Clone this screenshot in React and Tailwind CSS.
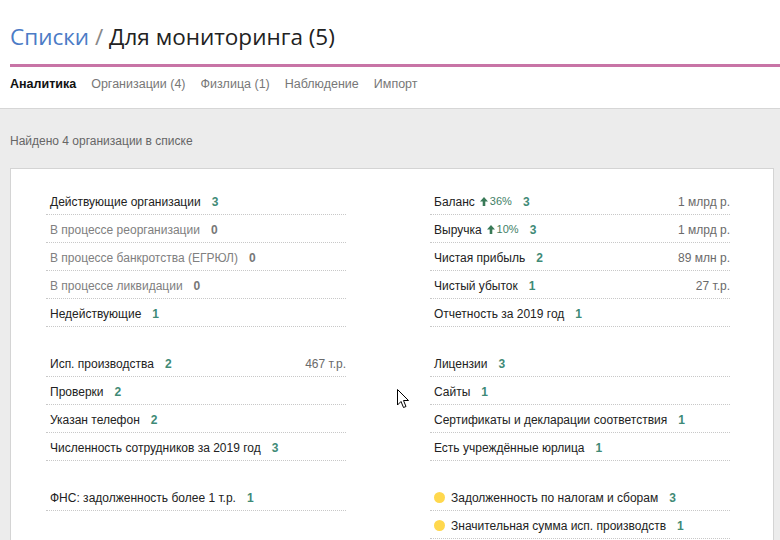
const groupsLeft = [
  [
    { label: "Действующие организации", count: 3 },
    { label: "В процессе реорганизации", count: 0, muted: true },
    { label: "В процессе банкротства (ЕГРЮЛ)", count: 0, muted: true },
    { label: "В процессе ликвидации", count: 0, muted: true },
    { label: "Недействующие", count: 1 },
  ],
  [
    { label: "Исп. производства", count: 2, value: "467 т.р." },
    { label: "Проверки", count: 2 },
    { label: "Указан телефон", count: 2 },
    { label: "Численность сотрудников за 2019 год", count: 3 },
  ],
  [{ label: "ФНС: задолженность более 1 т.р.", count: 1 }],
];

const groupsRight = [
  [
    { label: "Баланс", trend: "36%", count: 3, value: "1 млрд р." },
    { label: "Выручка", trend: "10%", count: 3, value: "1 млрд р." },
    { label: "Чистая прибыль", count: 2, value: "89 млн р." },
    { label: "Чистый убыток", count: 1, value: "27 т.р." },
    { label: "Отчетность за 2019 год", count: 1 },
  ],
  [
    { label: "Лицензии", count: 3 },
    { label: "Сайты", count: 1 },
    { label: "Сертификаты и декларации соответствия", count: 1 },
    { label: "Есть учреждённые юрлица", count: 1 },
  ],
  [
    { label: "Задолженность по налогам и сборам", count: 3, dot: true },
    { label: "Значительная сумма исп. производств", count: 1, dot: true },
  ],
];

function Row({ row }) {
  return (
    <div className="h-[28px] pt-[2px] flex items-center pl-1 border-b border-dotted border-[#c8c8c8]">
      {row.dot && <span className="w-[11px] h-[11px] rounded-full bg-[#ffd84d] mr-[6px] shrink-0" />}
      <span className={row.muted ? "text-[#808080]" : "text-[#222]"}>{row.label}</span>
      {row.trend && (
        <span className="ml-[5px] flex items-center text-[11px] text-[#3f8066]">
          <svg width="8" height="9" viewBox="0 0 8 9" className="mr-[2px]">
            <path d="M4 0 L8 4.5 H5.3 V9 H2.7 V4.5 H0 Z" fill="#3a7a58" />
          </svg>
          {row.trend}
        </span>
      )}
      <span className={"ml-[11px] font-bold " + (row.muted ? "text-[#777]" : "text-[#3f8a76]")}>
        {row.count}
      </span>
      {row.value && <span className="ml-auto text-[#6a6a6a]">{row.value}</span>}
    </div>
  );
}

function Column({ groups }) {
  return (
    <div className="flex flex-col gap-[22px]">
      {groups.map((g, i) => (
        <div key={i}>
          {g.map((r) => (
            <Row key={r.label} row={r} />
          ))}
        </div>
      ))}
    </div>
  );
}

export default function App() {
  const tabs = ["Организации (4)", "Физлица (1)", "Наблюдение", "Импорт"];
  return (
    <div className="relative w-[780px] h-[540px] overflow-hidden bg-[#ececec] font-['Liberation_Sans',Arial,sans-serif] text-[12px]">
      <header className="bg-white h-[109px] pl-[10px] border-b border-[#d6d6d6]">
        <h1 className="pt-[21px] h-[64px] text-[22.5px] leading-[32px] font-['Open_Sans',sans-serif] text-[#222]">
          <span className="text-[#4b7bc6]">Списки</span>
          <span className="text-[#888]"> / </span>
          Для мониторинга (5)
        </h1>
        <div className="h-[3px] bg-[#c874a6]" />
        <nav className="flex gap-[15px] pt-[8px] text-[12.5px] text-[#777]">
          <span className="font-bold text-[#111]">Аналитика</span>
          {tabs.map((t) => (
            <span key={t}>{t}</span>
          ))}
        </nav>
      </header>

      <p className="pl-[10px] pt-[24px] pb-[19px] text-[#666] leading-[16px]">Найдено 4 организации в списке</p>

      <section className="ml-[10px] mr-[6px] bg-white border border-[#d4d4d4] pt-[18px] pl-[35px] h-[400px]">
        <div className="grid grid-cols-[300px_300px] gap-x-[84px]">
          <Column groups={groupsLeft} />
          <Column groups={groupsRight} />
        </div>
      </section>

      <svg className="absolute left-[397px] top-[389px]" width="13" height="20" viewBox="0 0 13 20">
        <path
          d="M0.5 0.5 L0.5 16 L4 12.5 L6.5 18.5 L9 17.5 L6.5 11.5 L11.5 11.5 Z"
          fill="#fff"
          stroke="#000"
          strokeWidth="1"
          strokeLinejoin="miter"
        />
      </svg>
    </div>
  );
}
